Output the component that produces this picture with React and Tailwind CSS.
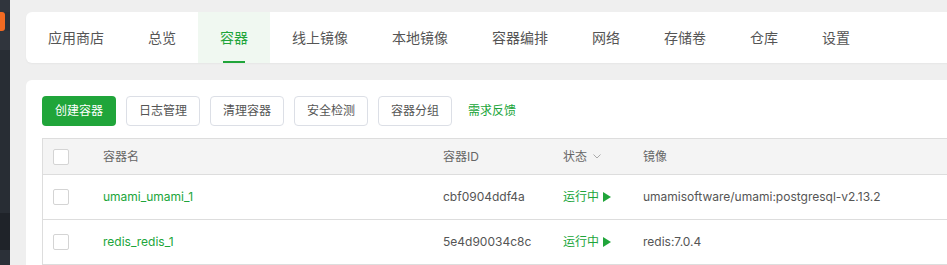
const tabs = ["应用商店", "总览", "容器", "线上镜像", "本地镜像", "容器编排", "网络", "存储卷", "仓库", "设置"];

const actions = ["日志管理", "清理容器", "安全检测", "容器分组"];

const containers = [
  {
    name: "umami_umami_1",
    id: "cbf0904ddf4a",
    status: "运行中",
    image: "umamisoftware/umami:postgresql-v2.13.2",
  },
  {
    name: "redis_redis_1",
    id: "5e4d90034c8c",
    status: "运行中",
    image: "redis:7.0.4",
  },
];

const font = { fontFamily: "Inter, 'Noto Sans CJK SC', sans-serif" };

const cols = "grid grid-cols-[45px_340px_120px_80px_1fr] items-center";

const Checkbox = () => (
  <span className="block w-4 h-4 border border-[#d4d4d4] rounded-[2px] bg-white ml-[10px]" />
);

const App = () => {
  return (
    <div
      className="flex h-screen w-full overflow-hidden bg-[#efefef] text-[#555]"
      style={font}
    >
      <aside className="w-[10px] shrink-0 flex flex-col bg-[#2b3038]">
        <div className="h-3 bg-[#30353d]" />
        <div className="h-[19px] w-[5px] rounded-r-[3px] bg-[#f26a22]" />
        <div className="h-[19px] bg-[#30353d]" />
        <div className="h-[163px] bg-[#282d34]" />
        <div className="h-[37px] bg-[#1f2329]" />
        <div className="flex-1 bg-[#2b3038]" />
      </aside>

      <main className="flex-1 pl-4 pt-3 min-w-0">
        <nav className="flex h-[51px] bg-white rounded-l-md w-[940px] shadow-[0_1px_2px_rgba(0,0,0,0.04)]">
          {tabs.map((tab) => {
            const active = tab === "容器";
            return (
              <div
                key={tab}
                className={`relative flex items-center px-[22px] text-sm ${
                  active ? "bg-[#f0f8f1] text-[#20a53a]" : "text-[#555]"
                }`}
              >
                {tab}
                {active && (
                  <span className="absolute bottom-0 left-1/2 -translate-x-1/2 w-[22px] h-[2px] bg-[#20a53a]" />
                )}
              </div>
            );
          })}
        </nav>

        <section className="mt-[17px] bg-white rounded-tl-md w-[940px] h-[200px] pl-4 pt-4">
          <div className="flex items-center gap-[10px] text-xs">
            <button className="h-[30px] w-[74px] rounded bg-[#20a53a] text-white">
              创建容器
            </button>
            {actions.map((a) => (
              <button
                key={a}
                className="h-[30px] w-[74px] rounded border border-[#dcdfe6] bg-white text-[#555]"
              >
                {a}
              </button>
            ))}
            <span className="ml-[6px] text-[#20a53a]">需求反馈</span>
          </div>

          <div className="mt-3 border-l border-t border-[#ddd] text-xs">
            <div className={`${cols} h-9 bg-[#f4f4f4] border-b border-[#ddd] text-[#666]`}>
              <Checkbox />
              <span className="pl-[15px]">容器名</span>
              <span className="pl-[15px]">容器ID</span>
              <span className="pl-[15px] flex items-center gap-[6px]">
                状态
                <svg width="8" height="5" viewBox="0 0 8 5" fill="none">
                  <path d="M0.5 0.5L4 4L7.5 0.5" stroke="#aaa" strokeWidth="1" />
                </svg>
              </span>
              <span className="pl-[15px]">镜像</span>
            </div>
            {containers.map((c) => (
              <div key={c.id} className={`${cols} h-[45px] border-b border-[#ddd]`}>
                <Checkbox />
                <span className="pl-[15px] text-[#20a53a]">{c.name}</span>
                <span className="pl-[15px] text-[#555]">{c.id}</span>
                <span className="pl-[15px] flex items-center gap-1 text-[#20a53a]">
                  {c.status}
                  <svg width="8" height="10" viewBox="0 0 8 10">
                    <path d="M0 0L8 5L0 10Z" fill="#20a53a" />
                  </svg>
                </span>
                <span className="pl-[15px] text-[#555] whitespace-nowrap">{c.image}</span>
              </div>
            ))}
          </div>
        </section>
      </main>
    </div>
  );
};

export default App;
